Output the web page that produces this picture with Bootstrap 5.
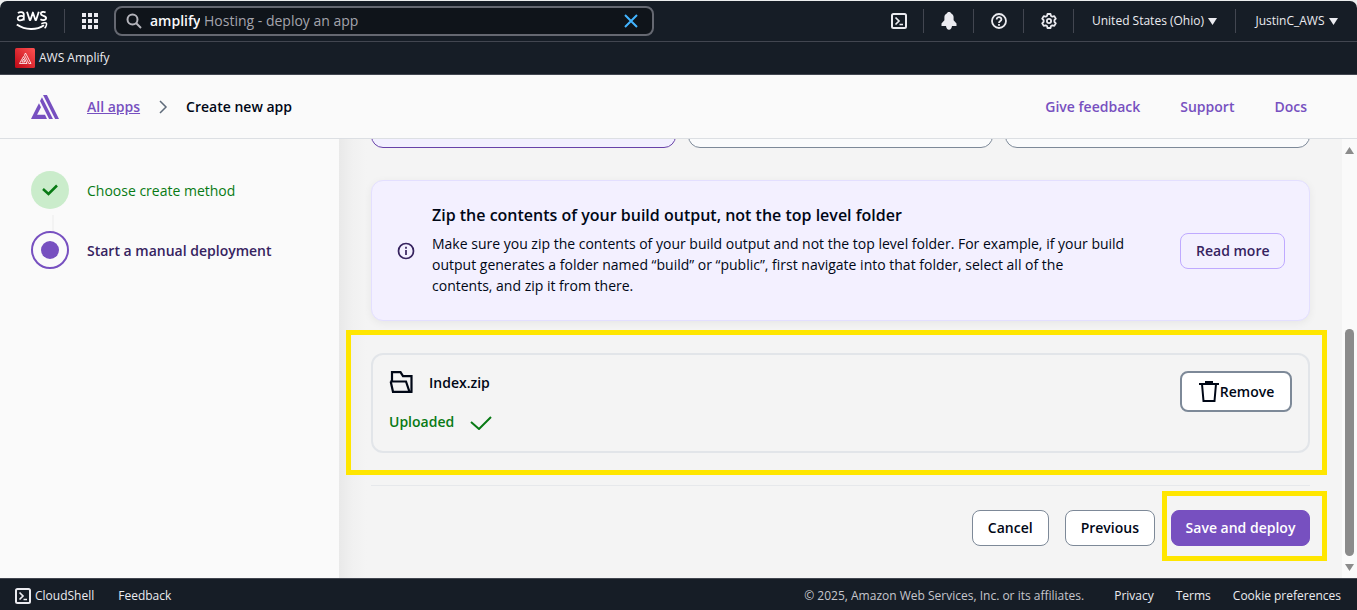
<!DOCTYPE html>
<html lang="en">
<head>
<meta charset="utf-8">
<meta name="viewport" content="width=device-width, initial-scale=1">
<title>Create new app - AWS Amplify</title>
<link href="https://cdn.jsdelivr.net/npm/bootstrap@5.3.0/dist/css/bootstrap.min.css" rel="stylesheet">
<style>
  body { font-family: "Open Sans", "Noto Sans", sans-serif; font-size: 14px; line-height: 21px; color: #000716; background: #eceeee; padding-top: 1px; overflow: hidden; }
  svg { display: block; flex: none; }
  a { text-decoration: none; }
  .console-nav { background: #161d26; color: #ebebf0; font-size: 12px; line-height: 16px; border-radius: 7px 7px 0 0; }
  .console-row { height: 41px; border-bottom: 1px solid #424650; }
  .service-row { height: 33px; border-bottom: 1px solid #424650; padding: 0 15px; }
  .console-nav a, .console-nav button { color: inherit; }
  .bare { background: none; border: 0; padding: 0; }
  .cell { height: 24px; border-right: 1px solid #424650; }
  .cell:last-child { border-right: 0; }
  .logo-cell { width: 65px; }
  .grid-cell { width: 49px; }
  .icon-cell { width: 50px; }
  .region-cell { width: 162px; }
  .user-cell { width: 121px; }
  .search { width: 540px; height: 30px; background: #0f141a; border: 2px solid #656871; border-radius: 8px; color: #a4a4ad; font-size: 14px; padding: 0 14px 0 10px; }
  .search input { width: 50px; color: #f9f9fa; background: none; border: 0; padding: 0; outline: 0; font-weight: 600; }
  .app-head { height: 64px; background: #fafafa; border-bottom: 1px solid #dcdfe3; font-weight: 600; padding: 0 50px 0 31px; }
  .app-head a { color: #7750c0; }
  .crumbs { margin-left: 28px; gap: 16px; }
  .head-links { gap: 40px; }
  .side { width: 339px; background: #fafafa; padding: 32px 31px; }
  .step { gap: 18px; }
  .disc { width: 38px; height: 38px; border-radius: 50%; flex: none; }
  .disc-done { background: #caeccb; }
  .disc-now { border: 2px solid #7750c0; }
  .disc-now i { width: 18px; height: 18px; border-radius: 50%; background: #7750c0; }
  .rail { width: 2px; height: 16px; margin: 6px 0 0 21px; background: #f3f3f3; }
  .text-done { color: #087a14; }
  .text-now { color: #36235f; font-weight: 600; }
  .stage { background: linear-gradient(90deg, #e9e9e9 0, #f1f1f1 14px, #f4f4f4 28px); padding: 0 32px; }
  .options { height: 9px; gap: 12px; overflow: hidden; align-items: flex-end; }
  .option { height: 90px; background: #fafbfc; border: 1px solid #7d8998; border-radius: 12px; }
  .option.chosen { background: #f2f0ff; border-color: #6842a8; }
  .notice { margin-top: 32px; padding: 24px; background: #f3f0ff; border: 1px solid #e3dfff; border-radius: 12px; box-shadow: 0 2px 8px rgba(0,7,22,.06); }
  .notice-copy { margin-left: 17px; width: 700px; }
  .notice h2 { font-size: 16px; line-height: 20px; font-weight: 600; margin: 0 0 8px; }
  .action { height: 36px; border: 1px solid #7d8998; border-radius: 8px; background: #fff; color: #000716; font-size: 14px; line-height: 20px; font-weight: 600; padding: 0 15px; white-space: nowrap; }
  .action-soft { background: #f3f0ff; border-color: #bfaaff; color: #36235f; width: 105px; }
  .action-main { background: #7750c0; border-color: #7750c0; color: #fff; width: 139px; padding: 0; }
  .action-remove { height: 41px; width: 112px; border-width: 2px; padding: 0; }
  .file-wrap { margin-top: 32px; }
  .file { height: 100px; border: 2px solid #e2e5e9; border-radius: 12px; padding: 16px; }
  .uploaded { margin-top: 18px; }
  .ring { position: absolute; border: 5px solid #ffe600; pointer-events: none; }
  .ring-file { inset: -23px -17px -22px -25px; }
  .ring-save { inset: -19px -17px -15px -9px; }
  .rule { margin-top: 32px; border-top: 1px solid #e6e8eb; padding-top: 24px; }
  .track { width: 15px; background: #fafafa; padding: 8px 0 7px; }
  .before { flex: 175; }
  .thumb { width: 9px; flex: 226; border-radius: 5px; background: #8b8b8b; }
  .console-foot { height: 32px; background: #161d26; border-top: 1px solid #424650; color: #ebebf0; font-size: 12px; line-height: 16px; padding: 2px 16px 0 15px; }
  .console-foot a, .console-foot button { color: inherit; }
  .legal { color: #c6c6cd; margin-right: 30px; }
  .foot-links { gap: 22px; }
</style>
</head>
<body class="vh-100 d-flex flex-column">
<svg width="0" height="0" class="position-absolute" aria-hidden="true">
  <symbol id="shell" viewBox="0 0 16 16"><rect x="1" y="1" width="14" height="14" rx="1.500" fill="none" stroke="currentColor" stroke-width="2"/><path d="M4.500 4.500 8 8l-3.500 3.500M8.500 11.500h3.500" fill="none" stroke="currentColor" stroke-width="1.700"/></symbol>
</svg>

<header class="console-nav">
  <div class="console-row d-flex align-items-center">
    <a href="#" class="cell logo-cell d-flex align-items-center ps-3" aria-label="AWS home">
      <svg width="32" height="22" viewBox="0 0 32 22" fill="none" stroke="#fff"><g stroke-width="1.800"><path d="M2 3.200C3.500 1.700 7.800 1.500 7.800 4.500v6M7.800 6.300C5 5.500 1.600 6 1.700 8.400c.1 3 4.700 2.400 6.100.2"/><path d="m11 1.800 2.700 8.200h.7l2.500-7.500 2.500 7.500h.7l2.700-8.200" stroke-linejoin="round"/><path d="M29.600 2.500c-1.700-.9-4.800-.8-4.800 1.200 0 2.600 5.300 1.600 5.300 4.300 0 2.400-3.700 2.500-5.700 1.300"/></g><path d="M.8 14.500c8.600 5.900 19.800 6 27.200.8" stroke-width="2"/><path d="M25.300 13.700c1.900-.7 4.800-1 5.200-.3.400.8-.5 3.600-1.900 4.900" stroke-width="1.500"/></svg>
    </a>
    <button class="bare grid-cell d-flex justify-content-center" aria-label="Services">
      <svg width="16" height="16" fill="currentColor"><path d="M0 0h4v4H0zm6 0h4v4H6zm6 0h4v4h-4zM0 6h4v4H0zm6 0h4v4H6zm6 0h4v4h-4zM0 12h4v4H0zm6 0h4v4H6zm6 0h4v4h-4z"/></svg>
    </button>
    <div class="search d-flex align-items-center">
      <svg width="16" height="16" class="me-2" viewBox="0 0 16 16" fill="none" stroke="#b4b4bb" stroke-width="2"><circle cx="6.500" cy="6.500" r="5"/><path d="m10 10 5 5"/></svg>
      <input type="text" value="amplify" aria-label="Search"><span class="ms-1 flex-grow-1">Hosting - deploy an app</span>
      <button class="bare" aria-label="Clear search"><svg width="14" height="14" fill="none" stroke="#42b4ff" stroke-width="2"><path d="m1 1 12 12M13 1 1 13"/></svg></button>
    </div>
    <nav class="d-flex align-items-center ms-auto">
      <button class="bare cell icon-cell d-flex align-items-center justify-content-center" aria-label="CloudShell"><svg width="16" height="16"><use href="#shell"/></svg></button>
      <button class="bare cell icon-cell d-flex align-items-center justify-content-center" aria-label="Notifications"><svg width="16" height="18" viewBox="0 0 16 18" fill="currentColor"><path d="M8 0C6.800 0 6 .7 5.700 1.400 4.200 2.200 3.400 3.500 3.400 5.200v3L.5 11.500V14H5c.3 2.300 1.400 3.700 3 3.700s2.700-1.400 3-3.700h4.500v-2.500l-2.900-3.300v-3c0-1.700-.8-3-2.300-3.800C10 .7 9.200 0 8 0"/></svg></button>
      <button class="bare cell icon-cell d-flex align-items-center justify-content-center" aria-label="Help"><svg width="16" height="16" viewBox="0 0 16 16" fill="none" stroke="currentColor" stroke-width="1.800"><circle cx="8" cy="8" r="7"/><path d="M5.700 6.500c0-3.300 4.800-3 4.700-.1C10.400 8 8 7.900 8 10M8 11v1.800"/></svg></button>
      <button class="bare cell icon-cell d-flex align-items-center justify-content-center" aria-label="Settings"><svg width="16" height="16" viewBox="0 0 16 16" fill="none" stroke="currentColor" stroke-width="1.800" stroke-linejoin="round"><path d="M6.500 1h3l.5 2 1.300.7 2-.6 1.500 2.500L13.400 7.200v1.600l1.400 1.600-1.500 2.500-2-.6-1.300.7-.5 2h-3L6 13l-1.300-.7-2 .6-1.500-2.500 1.400-1.600V7.200L1.200 5.600l1.500-2.500 2 .6L6 3z"/><circle cx="8" cy="8" r="2.100"/></svg></button>
      <button class="bare cell region-cell d-flex align-items-center justify-content-center gap-1">United States (Ohio) <svg width="9" height="7" fill="currentColor"><path d="M0 0h9L4.500 7z"/></svg></button>
      <button class="bare cell user-cell d-flex align-items-center justify-content-center gap-1">JustinC_AWS <svg width="9" height="7" fill="currentColor"><path d="M0 0h9L4.500 7z"/></svg></button>
    </nav>
  </div>
  <div class="service-row d-flex align-items-center">
    <a href="#" class="d-flex align-items-center gap-1">
      <svg width="20" height="20" viewBox="0 0 20 20"><defs><linearGradient id="red" x1="0" y1="1" x2="1" y2="0"><stop stop-color="#bd0816"/><stop offset="1" stop-color="#ff5252"/></linearGradient></defs><rect width="20" height="20" rx="1.500" fill="url(#red)"/><path d="m10.500 5 5.500 10.500h-2.200L9.500 7zM8.500 8.500l3.500 7H4.500zM8.500 11l-1.600 3h3z" fill="none" stroke="#fff" stroke-width=".8"/></svg>
      AWS Amplify
    </a>
  </div>
</header>

<div class="app-head d-flex align-items-center">
  <svg width="28" height="24" viewBox="0 3 24 18" preserveAspectRatio="none" fill="#7750c0"><path d="M5.223 17.905h6.760l1.731 3.047H0l4.815-8.344 2.018-3.494 1.733 3.002zm2.520-10.371L9.408 4.650l9.415 16.301h-3.334zm2.590-4.486h3.330L24 20.952h-3.334z"/></svg>
  <nav class="crumbs d-flex align-items-center" aria-label="Breadcrumb">
    <a href="#" class="text-decoration-underline">All apps</a>
    <svg width="14" height="14" fill="none" stroke="#5f6b7a" stroke-width="1.500"><path d="m4 1 6 6-6 6"/></svg>
    <span>Create new app</span>
  </nav>
  <nav class="head-links d-flex ms-auto">
    <a href="#">Give feedback</a><a href="#">Support</a><a href="#">Docs</a>
  </nav>
</div>

<div class="d-flex flex-grow-1 overflow-hidden">
  <aside class="side flex-shrink-0">
    <div class="step d-flex align-items-center"><span class="disc disc-done d-flex align-items-center justify-content-center"><svg width="16" height="12" fill="none" stroke="#087a14" stroke-width="2.500"><path d="m1 5 5.500 5L15 1.500"/></svg></span><span class="text-done">Choose create method</span></div>
    <div class="rail"></div>
    <div class="step d-flex align-items-center"><span class="disc disc-now d-flex align-items-center justify-content-center"><i></i></span><span class="text-now">Start a manual deployment</span></div>
  </aside>
  <main class="stage flex-grow-1 overflow-hidden">
    <div class="options d-flex">
      <div class="option chosen flex-fill"></div><div class="option flex-fill"></div><div class="option flex-fill"></div>
    </div>
    <section class="notice d-flex align-items-center">
      <svg width="19" height="18" viewBox="0 0 19 18" fill="none" stroke="#36235f" stroke-width="1.700"><circle cx="10" cy="9" r="7.500"/><path d="M10 8v5M10 4.800v1.900"/></svg>
      <div class="notice-copy">
        <h2>Zip the contents of your build output, not the top level folder</h2>
        <p class="m-0">Make sure you zip the contents of your build output and not the top level folder. For example, if your build<br>output generates a folder named “build” or “public”, first navigate into that folder, select all of the<br>contents, and zip it from there.</p>
      </div>
      <button class="action action-soft ms-auto">Read more</button>
    </section>
    <section class="file-wrap position-relative">
      <div class="file d-flex justify-content-between align-items-start">
        <div>
          <div class="d-flex align-items-center gap-3"><svg width="24" height="22" viewBox="0 0 24 22" fill="none" stroke="#000716" stroke-width="2.200"><path d="M3 10V1.200h8.500l2.500 4h8.500v15.600M1.200 10.500H17l3.500 10.300H4L1.700 10.500M20 20.800h3.500"/></svg><b class="fw-semibold">Index.zip</b></div>
          <div class="uploaded d-flex align-items-center gap-3 text-done"><b class="fw-semibold">Uploaded</b><svg width="22" height="16" fill="none" stroke="#087a14" stroke-width="2"><path d="m1 8 8 7L21 3"/></svg></div>
        </div>
        <button class="action action-remove d-flex align-items-center justify-content-center"><svg width="22" height="22" viewBox="0 0 22 22" fill="none" stroke="#000716" stroke-width="2"><path d="M1 3h20M7 1h8M4 3l1.500 17h11L18 3"/></svg>Remove</button>
      </div>
      <div class="ring ring-file"></div>
    </section>
    <div class="rule d-flex justify-content-end gap-3">
      <button class="action">Cancel</button>
      <button class="action">Previous</button>
      <div class="position-relative"><button class="action action-main">Save and deploy</button><div class="ring ring-save"></div></div>
    </div>
  </main>
  <div class="track d-flex flex-column align-items-center flex-shrink-0">
    <svg width="9" height="7" fill="#8b8b8b"><path d="M4.500 0 9 7H0z"/></svg>
    <div class="before"></div><div class="thumb"></div>
    <svg width="9" height="7" class="mt-2" fill="#8b8b8b"><path d="M0 0h9L4.500 7z"/></svg>
  </div>
</div>

<footer class="console-foot d-flex align-items-center">
  <button class="bare d-flex align-items-center gap-1"><svg width="16" height="16"><use href="#shell"/></svg>CloudShell</button>
  <a href="#" class="ms-4">Feedback</a>
  <span class="legal ms-auto">© 2025, Amazon Web Services, Inc. or its affiliates.</span>
  <nav class="foot-links d-flex"><a href="#">Privacy</a><a href="#">Terms</a><a href="#">Cookie preferences</a></nav>
</footer>
<script src="https://cdn.jsdelivr.net/npm/bootstrap@5.3.0/dist/js/bootstrap.bundle.min.js"></script>
</body>
</html>
